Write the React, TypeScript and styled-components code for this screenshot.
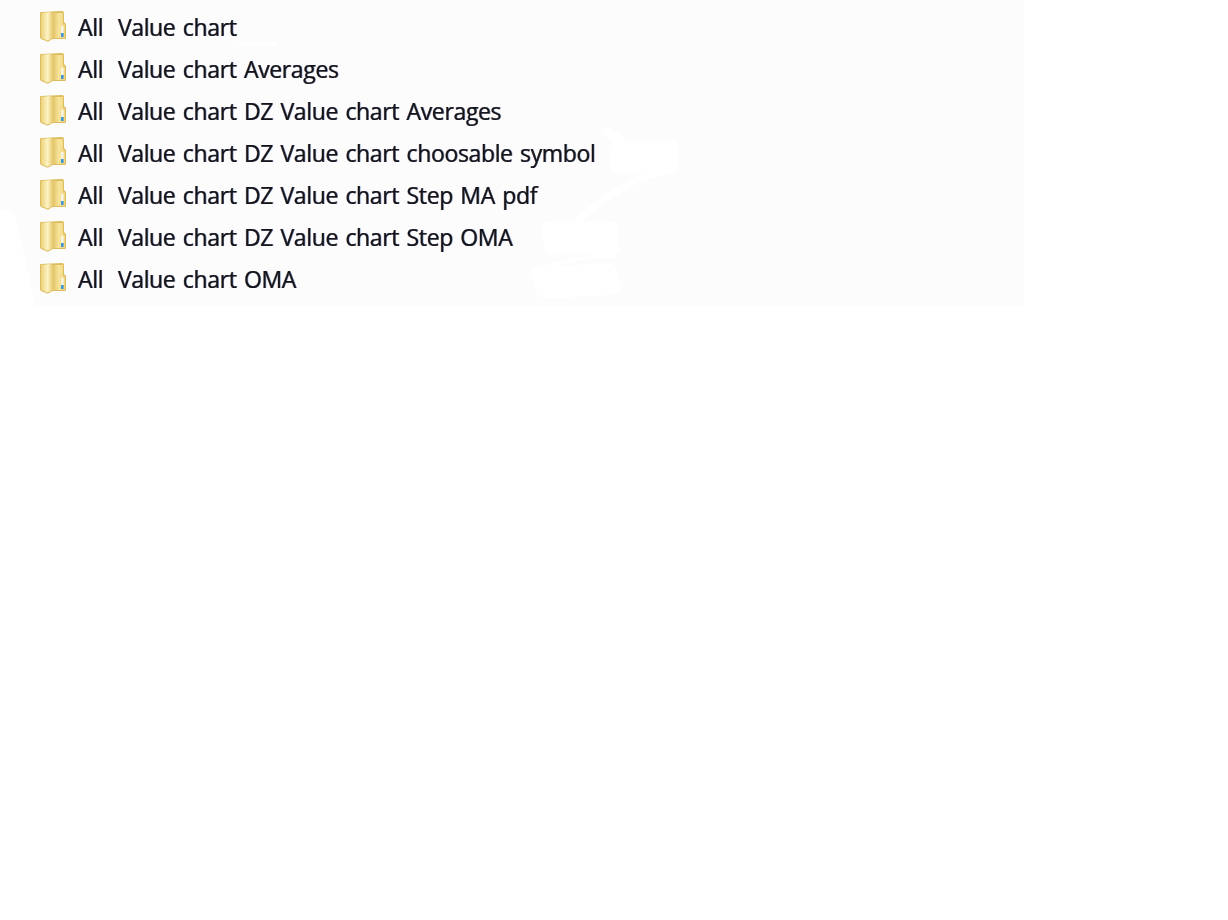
import styled, { createGlobalStyle } from "styled-components";

const folders = [
  "All  Value chart",
  "All  Value chart Averages",
  "All  Value chart DZ Value chart Averages",
  "All  Value chart DZ Value chart choosable symbol",
  "All  Value chart DZ Value chart Step MA pdf",
  "All  Value chart DZ Value chart Step OMA",
  "All  Value chart OMA",
];

function FolderIcon() {
  return (
    <FolderSvg viewBox="0 0 28 32" aria-hidden="true">
      <defs>
        <linearGradient id="folderFront" x1="0" y1="0" x2="1" y2="0">
          <stop offset="0" stopColor="#ecd27c" />
          <stop offset="0.55" stopColor="#fdf3c2" />
          <stop offset="1" stopColor="#e4c66c" />
        </linearGradient>
        <linearGradient id="folderBack" x1="0" y1="0" x2="1" y2="0">
          <stop offset="0" stopColor="#e2c468" />
          <stop offset="0.5" stopColor="#f7e59c" />
          <stop offset="1" stopColor="#eed582" />
        </linearGradient>
      </defs>
      <path d="M2 2 L23 1 Q25 1 25 3 V12 L27 14 V28 Q27 29 26 29 H14 L10 31 Q9 32 7 31 L2 29 Q1 28 1 27 V3 Q1 2 2 2 Z" fill="#dcbc5c" />
      <path d="M14 3 H24 V13 L26 15 V28 H14 Z" fill="url(#folderBack)" />
      <path d="M2 3 L11 2 Q14 2 14 4 V27 Q14 29 12 29.5 L8 30.5 L2.5 28 Q2 27.5 2 27 Z" fill="url(#folderFront)" />
      <rect x="22" y="16" width="2.6" height="7" fill="#f6f3e2" />
      <rect x="22" y="23" width="2.6" height="4" fill="#3f96d2" />
    </FolderSvg>
  );
}

export default function App() {
  return (
    <>
      <GlobalStyle />
      <Panel>
        {folders.map((name) => (
          <Row key={name}>
            <FolderIcon />
            <Label>{name}</Label>
          </Row>
        ))}
        <Scribble viewBox="0 0 1024 306" aria-hidden="true">
          <path d="M0 210 L14 212 L36 306 H0 Z" fill="#fff" />
          <ScribbleLine d="M240 44 H274" strokeWidth="4" />
          <ScribbleLine d="M608 132 L622 142" strokeWidth="10" />
          <ScribbleLine d="M618 148 H672 V166 H618 Z" strokeWidth="14" fill="#fff" />
          <ScribbleLine d="M668 170 Q620 180 572 226" strokeWidth="7" />
          <ScribbleLine d="M548 228 H612 V248 H552 Z" strokeWidth="14" fill="#fff" />
          <ScribbleLine d="M612 256 Q565 258 540 270" strokeWidth="4" />
          <ScribbleLine d="M540 276 L608 272 L612 286 L545 289 Z" strokeWidth="18" fill="#fff" />
        </Scribble>
      </Panel>
    </>
  );
}

const GlobalStyle = createGlobalStyle`
  html, body {
    margin: 0;
    padding: 0;
    background: #fff;
  }
`;

const Panel = styled.div`
  position: relative;
  width: 1024px;
  height: 306px;
  box-sizing: border-box;
  padding-top: 6px;
  background: #fcfcfc;
  overflow: hidden;
`;

const Row = styled.div`
  display: flex;
  align-items: center;
  gap: 11px;
  height: 42px;
  padding-left: 39px;
`;

const FolderSvg = styled.svg`
  flex: none;
  width: 28px;
  height: 32px;
  margin-top: -2px;
  filter: blur(0.6px);
`;

const Label = styled.span`
  position: relative;
  z-index: 1;
  font-family: "Open Sans", "Noto Sans", sans-serif;
  font-size: 23px;
  letter-spacing: -0.36px;
  word-spacing: 1.8px;
  color: #14141c;
  white-space: pre;
  -webkit-text-stroke: 0.2px #14141c;
  text-shadow: 0.7px 0 0 rgba(40, 100, 190, 0.5), -0.5px 0 0 rgba(190, 100, 30, 0.45);
  filter: blur(0.4px);
`;

const Scribble = styled.svg`
  position: absolute;
  top: 0;
  left: 0;
  width: 1024px;
  height: 306px;
`;

const ScribbleLine = styled.path`
  fill: ${(p) => p.fill ?? "none"};
  stroke: #fff;
  stroke-linecap: round;
  stroke-linejoin: round;
`;
